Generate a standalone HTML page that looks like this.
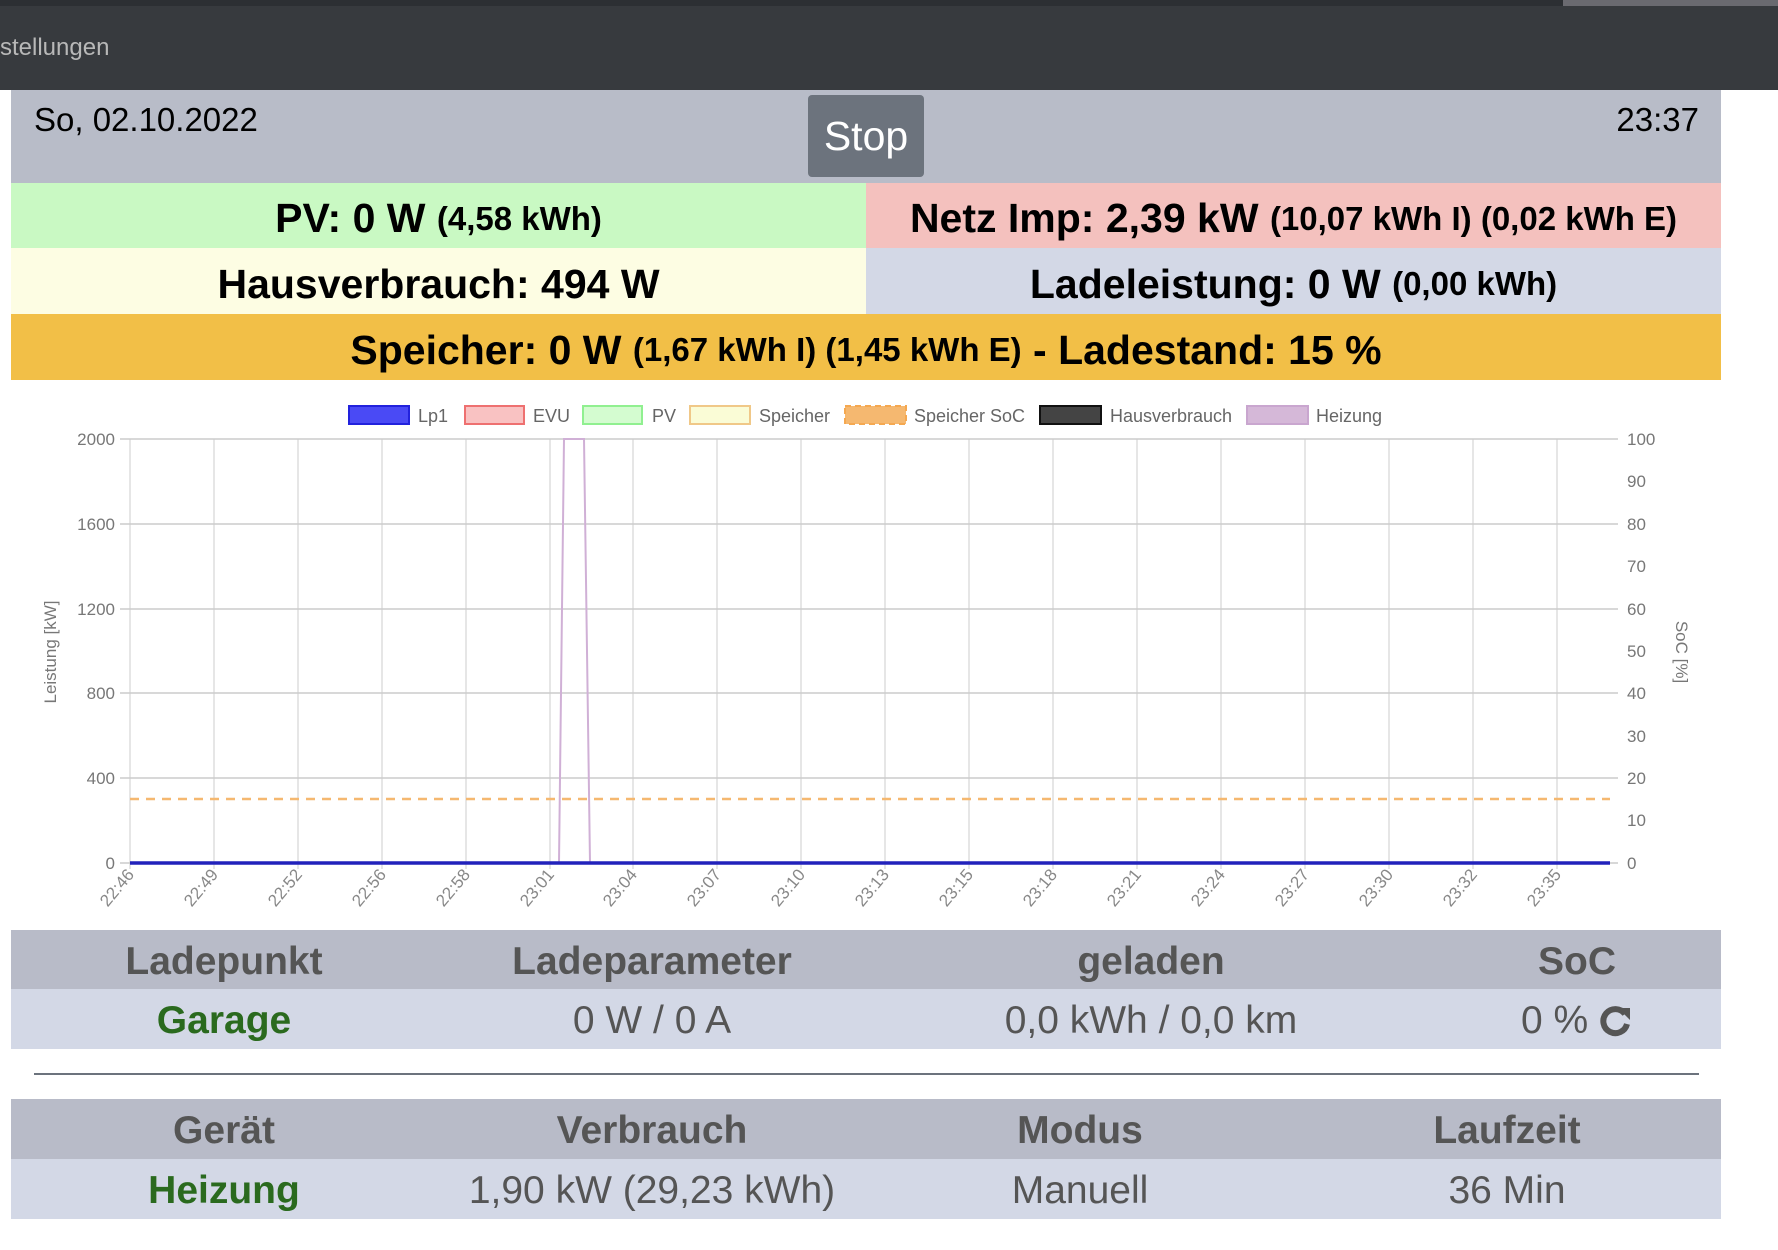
<!DOCTYPE html>
<html><head><meta charset="utf-8"><style>
*{margin:0;padding:0;box-sizing:border-box}
body{width:1778px;height:1250px;background:#fff;position:relative;overflow:hidden;font-family:"Liberation Sans",Arial,sans-serif}
.a{position:absolute}
.c{display:flex;align-items:center;justify-content:center;white-space:nowrap}
.b{font-weight:bold;font-size:41px;color:#000;padding-top:6px}
.b small{font-size:33px}
.th{font-weight:bold;font-size:39px;color:#555;text-align:center;padding-top:4px}
.td{font-size:39px;color:#555;text-align:center;padding-top:4px}
.g{color:#2a6a1e;font-weight:bold}
</style></head><body>
<div class="a" style="left:0;top:0;width:1778px;height:90px;background:#373a3e"></div>
<div class="a" style="left:0;top:0;width:1778px;height:6px;background:#2c2f33"></div>
<div class="a" style="left:1563px;top:0;width:215px;height:6px;background:#6a6a70"></div>
<div class="a" style="left:0;top:34px;font-size:24px;color:#b8b8b8">stellungen</div>

<div class="a" style="left:11px;top:90px;width:1710px;height:93px;background:#b8bcc8"></div>
<div class="a" style="left:34px;top:101px;font-size:33px;color:#000">So, 02.10.2022</div>
<div class="a" style="right:79px;top:101px;font-size:33px;color:#000">23:37</div>
<div class="a c" style="left:808px;top:95px;width:116px;height:82px;background:#6c737d;border-radius:4px;color:#fff;font-size:41px">Stop</div>

<div class="a c b" style="left:11px;top:183px;width:855px;height:65px;background:#c9f9c3">PV: 0 W&nbsp;<small>(4,58 kWh)</small></div>
<div class="a c b" style="left:866px;top:183px;width:855px;height:65px;background:#f4c1be">Netz Imp: 2,39 kW&nbsp;<small>(10,07 kWh I)&nbsp;(0,02 kWh E)</small></div>
<div class="a c b" style="left:11px;top:248px;width:855px;height:66px;background:#fdfde3">Hausverbrauch: 494 W</div>
<div class="a c b" style="left:866px;top:248px;width:855px;height:66px;background:#d3d8e6">Ladeleistung: 0 W&nbsp;<small>(0,00 kWh)</small></div>
<div class="a c b" style="left:11px;top:314px;width:1710px;height:66px;background:#f2bf47">Speicher: 0 W&nbsp;<small>(1,67 kWh I)&nbsp;(1,45 kWh E)</small>&nbsp;- Ladestand: 15 %</div>

<svg class="a" style="left:0;top:380px" width="1778" height="550" viewBox="0 380 1778 550" font-family="Liberation Sans, Arial, sans-serif">
<g font-size="18" fill="#666">
<rect x="349" y="406" width="60" height="18" fill="#4a4af5" stroke="#2222dd" stroke-width="2"/><text x="418" y="422">Lp1</text>
<rect x="465" y="406" width="59" height="18" fill="#f9c2c2" stroke="#ee7070" stroke-width="2"/><text x="533" y="422">EVU</text>
<rect x="583" y="406" width="59" height="18" fill="#d4fcd0" stroke="#90f090" stroke-width="2"/><text x="652" y="422">PV</text>
<rect x="690" y="406" width="60" height="18" fill="#fafcd6" stroke="#f0c888" stroke-width="2"/><text x="759" y="422">Speicher</text>
<rect x="845" y="406" width="61" height="18" fill="#f5b870" stroke="#f5a850" stroke-width="2" stroke-dasharray="6 4"/><text x="914" y="422">Speicher SoC</text>
<rect x="1040" y="406" width="61" height="18" fill="#444" stroke="#111" stroke-width="2"/><text x="1110" y="422">Hausverbrauch</text>
<rect x="1247" y="406" width="61" height="18" fill="#d5b8d8" stroke="#c9a6cf" stroke-width="2"/><text x="1316" y="422">Heizung</text>
</g>
<g stroke="#ccc" stroke-width="1">
<line x1="130" y1="439" x2="130" y2="869"/><line x1="214" y1="439" x2="214" y2="869"/><line x1="298" y1="439" x2="298" y2="869"/><line x1="382" y1="439" x2="382" y2="869"/><line x1="466" y1="439" x2="466" y2="869"/><line x1="550" y1="439" x2="550" y2="869"/><line x1="633" y1="439" x2="633" y2="869"/><line x1="717" y1="439" x2="717" y2="869"/><line x1="801" y1="439" x2="801" y2="869"/><line x1="885" y1="439" x2="885" y2="869"/><line x1="969" y1="439" x2="969" y2="869"/><line x1="1053" y1="439" x2="1053" y2="869"/><line x1="1137" y1="439" x2="1137" y2="869"/><line x1="1221" y1="439" x2="1221" y2="869"/><line x1="1305" y1="439" x2="1305" y2="869"/><line x1="1389" y1="439" x2="1389" y2="869"/><line x1="1473" y1="439" x2="1473" y2="869"/><line x1="1557" y1="439" x2="1557" y2="869"/>
</g>
<g stroke="#ccc" stroke-width="1.5">
<line x1="120" y1="439" x2="1618" y2="439"/><line x1="120" y1="524" x2="1618" y2="524"/><line x1="120" y1="609" x2="1618" y2="609"/><line x1="120" y1="693" x2="1618" y2="693"/><line x1="120" y1="778" x2="1618" y2="778"/><line x1="120" y1="863" x2="1618" y2="863"/>
</g>
<line x1="130" y1="799" x2="1610" y2="799" stroke="#f5b870" stroke-width="2.5" stroke-dasharray="9 7"/>
<polyline points="559,863 564,439 584,439 590,863" fill="none" stroke="#d0b0d6" stroke-width="2"/>
<line x1="130" y1="863" x2="1610" y2="863" stroke="#2222bb" stroke-width="3.5"/>
<g font-size="17" fill="#777" text-anchor="end">
<text x="115" y="445">2000</text><text x="115" y="530">1600</text><text x="115" y="615">1200</text><text x="115" y="699">800</text><text x="115" y="784">400</text><text x="115" y="869">0</text>
</g>
<g font-size="17" fill="#777">
<text x="1627" y="445">100</text><text x="1627" y="487">90</text><text x="1627" y="530">80</text><text x="1627" y="572">70</text><text x="1627" y="615">60</text><text x="1627" y="657">50</text><text x="1627" y="699">40</text><text x="1627" y="742">30</text><text x="1627" y="784">20</text><text x="1627" y="826">10</text><text x="1627" y="869">0</text>
</g>
<text transform="translate(56,652) rotate(-90)" font-size="17" fill="#777" text-anchor="middle">Leistung [kW]</text>
<text transform="translate(1676,652) rotate(90)" font-size="17" fill="#777" text-anchor="middle">SoC [%]</text>
<g font-size="17" fill="#888" text-anchor="end">
<text transform="translate(135,875) rotate(-50)">22:46</text><text transform="translate(219,875) rotate(-50)">22:49</text><text transform="translate(303,875) rotate(-50)">22:52</text><text transform="translate(387,875) rotate(-50)">22:56</text><text transform="translate(471,875) rotate(-50)">22:58</text><text transform="translate(555,875) rotate(-50)">23:01</text><text transform="translate(638,875) rotate(-50)">23:04</text><text transform="translate(722,875) rotate(-50)">23:07</text><text transform="translate(806,875) rotate(-50)">23:10</text><text transform="translate(890,875) rotate(-50)">23:13</text><text transform="translate(974,875) rotate(-50)">23:15</text><text transform="translate(1058,875) rotate(-50)">23:18</text><text transform="translate(1142,875) rotate(-50)">23:21</text><text transform="translate(1226,875) rotate(-50)">23:24</text><text transform="translate(1310,875) rotate(-50)">23:27</text><text transform="translate(1394,875) rotate(-50)">23:30</text><text transform="translate(1478,875) rotate(-50)">23:32</text><text transform="translate(1562,875) rotate(-50)">23:35</text>
</g>
</svg>

<div class="a" style="left:11px;top:930px;width:1710px;height:59px;background:#b8bbc8"></div>
<div class="a" style="left:11px;top:989px;width:1710px;height:60px;background:#d3d8e6"></div>
<div class="a c th" style="left:74px;top:930px;width:300px;height:59px">Ladepunkt</div>
<div class="a c th" style="left:452px;top:930px;width:400px;height:59px">Ladeparameter</div>
<div class="a c th" style="left:951px;top:930px;width:400px;height:59px">geladen</div>
<div class="a c th" style="left:1477px;top:930px;width:200px;height:59px">SoC</div>
<div class="a c td g" style="left:74px;top:989px;width:300px;height:60px">Garage</div>
<div class="a c td" style="left:452px;top:989px;width:400px;height:60px">0 W / 0 A</div>
<div class="a c td" style="left:951px;top:989px;width:400px;height:60px">0,0 kWh / 0,0 km</div>
<div class="a c td" style="left:1477px;top:989px;width:200px;height:60px">0 %&nbsp;<svg width="34" height="34" viewBox="0 0 34 34"><path d="M26 10 A12 12 0 1 0 28 20" fill="none" stroke="#555" stroke-width="6"/><path d="M19 4 L31 4 L31 16 Z" fill="#555"/></svg></div>

<div class="a" style="left:34px;top:1073px;width:1665px;height:2px;background:#6c737d"></div>

<div class="a" style="left:11px;top:1099px;width:1710px;height:60px;background:#b8bbc8"></div>
<div class="a" style="left:11px;top:1159px;width:1710px;height:60px;background:#d3d8e6"></div>
<div class="a c th" style="left:74px;top:1099px;width:300px;height:60px">Gerät</div>
<div class="a c th" style="left:452px;top:1099px;width:400px;height:60px">Verbrauch</div>
<div class="a c th" style="left:880px;top:1099px;width:400px;height:60px">Modus</div>
<div class="a c th" style="left:1357px;top:1099px;width:300px;height:60px">Laufzeit</div>
<div class="a c td g" style="left:74px;top:1159px;width:300px;height:60px">Heizung</div>
<div class="a c td" style="left:452px;top:1159px;width:400px;height:60px">1,90 kW (29,23 kWh)</div>
<div class="a c td" style="left:880px;top:1159px;width:400px;height:60px">Manuell</div>
<div class="a c td" style="left:1357px;top:1159px;width:300px;height:60px">36 Min</div>
</body></html>
